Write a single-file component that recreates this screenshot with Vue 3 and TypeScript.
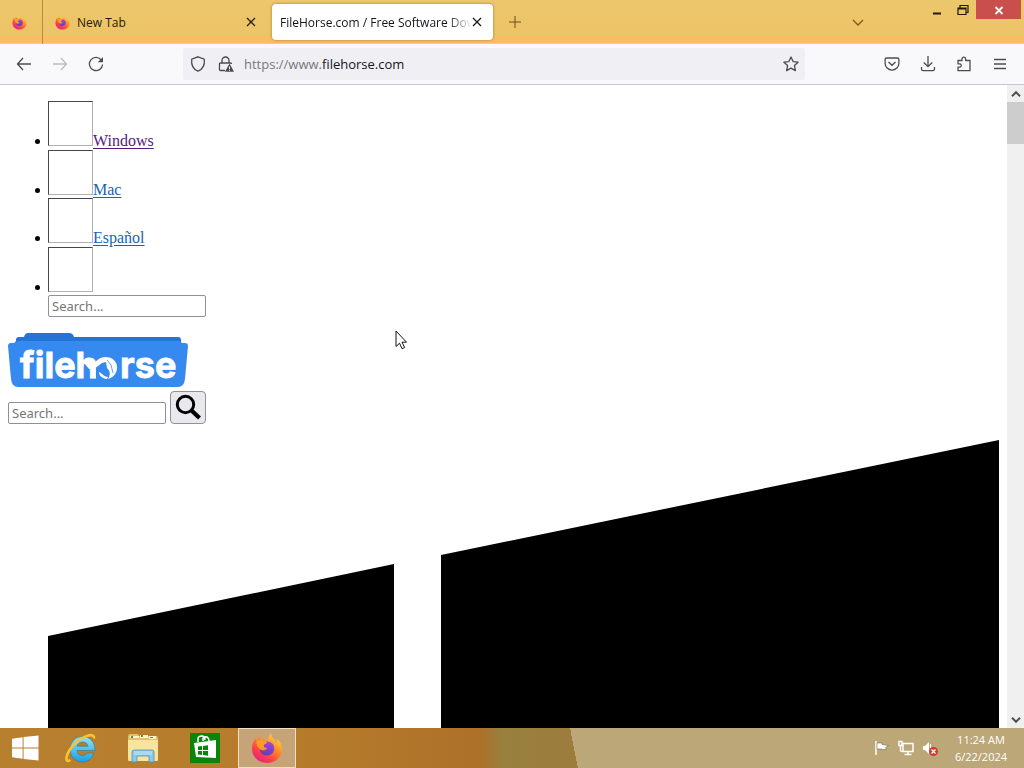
<script setup lang="ts">
import { ref } from 'vue'

interface NavLink {
  label: string
  visited: boolean
}

const links: NavLink[] = [
  { label: 'Windows', visited: true },
  { label: 'Mac', visited: false },
  { label: 'Español', visited: false },
]
const menuQuery = ref('')
const siteQuery = ref('')
</script>

<template>
  <svg class="defs" aria-hidden="true">
    <defs>
      <linearGradient id="fire" x1="0.85" y1="0.05" x2="0.2" y2="0.95">
        <stop offset="0" stop-color="#ffe14a" />
        <stop offset="0.4" stop-color="#ff8a26" />
        <stop offset="0.75" stop-color="#ff3d4a" />
        <stop offset="1" stop-color="#e3208a" />
      </linearGradient>
      <linearGradient id="globe" x1="0.6" y1="0" x2="0.3" y2="1">
        <stop offset="0" stop-color="#a347d8" />
        <stop offset="1" stop-color="#5b3cc0" />
      </linearGradient>
      <linearGradient id="ie" x1="0" y1="0" x2="0" y2="1">
        <stop offset="0" stop-color="#8be4fb" />
        <stop offset="1" stop-color="#1f9fdc" />
      </linearGradient>
      <symbol id="firefox" viewBox="0 0 32 32">
        <path fill="url(#fire)" d="M20.5 1c-.8 3 .7 4.600 2.600 6.300 1.400 1.200 2.200 2.600 2.700 4 .5-1.500.3-3.300-.2-4.600C29.300 9.200 31 13 31 17c0 8.200-6.500 14-15 14S1 24.800 1 16.800c0-4.300 1.400-7.600 3.700-10.300.1 1 .4 1.700.8 2.200C6.500 6.200 8 4.600 9.800 3.600c-.2 1.700.2 3 1 3.900 2.300-.1 4 .4 5.200 1.500C17.200 5.800 18 3 20.500 1z" />
        <path fill="url(#globe)" d="M16 9.500c4.300 0 7.300 3.100 7.300 7.100s-3.100 7-7.300 7-7.300-2.900-7.300-6.500c1.700 1.700 4 1.900 5.800 1 1.600-.8 2.100-1.700 1.500-2.100-1.300-.7-3.200.2-4.500-1.600C11 12.500 13 9.500 16 9.500z" />
        <path fill="#ff9b2b" d="M5.500 9c2-1.800 5.500-1.800 7.500.2 1.500.4 3 .7 3 1.600-.2 1-2.800 1.100-3.300 2.700-.2 1.300 1 2.300 2.600 2.600-1 1.900-3.900 2.500-6.300.900C6.500 15.500 5 12 5.500 9z" />
      </symbol>
      <symbol id="cross" viewBox="0 0 10 10">
        <path d="M1 1l8 8M9 1L1 9" fill="none" stroke="currentColor" stroke-width="1.200" />
      </symbol>
    </defs>
  </svg>

  <div class="desktop">
    <header class="tabs">
      <button class="pinned" aria-label="Pinned tab"><svg class="fav"><use href="#firefox" /></svg></button>
      <div class="tab">
        <svg class="fav"><use href="#firefox" /></svg>
        <span class="title">New Tab</span>
        <button class="x" aria-label="Close New Tab"><svg><use href="#cross" /></svg></button>
      </div>
      <div class="tab active">
        <span class="title fade">FileHorse.com / Free Software Dow</span>
        <button class="x" aria-label="Close FileHorse.com"><svg><use href="#cross" /></svg></button>
      </div>
      <button class="new" aria-label="New tab">
        <svg viewBox="0 0 12 12"><path d="M6 0v12M0 6h12" stroke="#6b4c1c" /></svg>
      </button>
      <button class="all" aria-label="List all tabs">
        <svg viewBox="0 0 12 7"><path d="M1 1l5 5 5-5" fill="none" stroke="#885510" stroke-width="1.300" /></svg>
      </button>
      <div class="window-buttons">
        <button aria-label="Minimize"><svg viewBox="0 0 12 12"><path d="M2 8.500h8v2H2z" fill="#22180b" /></svg></button>
        <button aria-label="Restore"><svg viewBox="0 0 12 12"><path d="M1 4h8v6.500H1zM1 5h8M3 3.500V1.500h8v7H9" fill="none" stroke="#22180b" stroke-width="1.200" /></svg></button>
        <button class="close" aria-label="Close"><svg viewBox="0 0 12 12"><path d="M2.500 3l7 7M9.500 3l-7 7" stroke="#fff" stroke-width="1.800" /></svg></button>
      </div>
    </header>

    <nav class="toolbar" aria-label="Navigation">
      <div class="history">
        <button aria-label="Back"><svg viewBox="0 0 16 16"><path d="M15 8H1.500M7 2L1.500 8 7 14" /></svg></button>
        <button class="off" aria-label="Forward" disabled><svg viewBox="0 0 16 16"><path d="M1 8h13.500M9 2l5.500 6L9 14" /></svg></button>
        <button aria-label="Reload"><svg viewBox="0 0 16 16"><path d="M13.500 4.300A6.600 6.600 0 1 0 14.600 8.500" /><path d="M15 1v5.200H9.800z" fill="#4b4b52" stroke="none" /></svg></button>
      </div>
      <div class="address">
        <button aria-label="Tracking protection"><svg viewBox="0 0 16 16"><path d="M8 .8l6.300 2.400c.5 5-.6 9.700-6.300 12-5.700-2.300-6.800-7-6.300-12z" /></svg></button>
        <button aria-label="Connection is not secure"><svg viewBox="0 0 16 16"><path d="M4 7V4.500a3.500 3.500 0 0 1 7 0V7M7 14.500H2.500c-.6 0-1-.4-1-1V8c0-.6.400-1 1-1h10c.6 0 1 .4 1 1" /><path d="M11.500 7.500L16 15.800H7z" fill="#4b4b52" stroke="none" /><path d="M11.500 10.500v2.500M11.500 13.700v1" stroke="#fff" stroke-width="1" /></svg></button>
        <span class="url">https://www.<b>filehorse.com</b></span>
        <button aria-label="Bookmark this page"><svg viewBox="0 0 16 16"><path d="M8 1l2.100 4.600 5 .6-3.700 3.400 1 5L8 12.100l-4.400 2.500 1-5L.9 6.200l5-.6z" stroke-linejoin="round" /></svg></button>
      </div>
      <div class="actions">
        <button aria-label="Save to Pocket"><svg viewBox="0 0 16 16"><path d="M2.500 2h11c.8 0 1.400.6 1.400 1.400v3.800a6.900 6.900 0 0 1-13.800 0V3.400C1.100 2.600 1.700 2 2.500 2zM4.500 6L8 9.300 11.500 6" /></svg></button>
        <button aria-label="Downloads"><svg viewBox="0 0 16 16"><path d="M8 0v10.500M3.800 6.500L8 10.700l4.200-4.200M1.500 11v2c0 1 .6 1.700 1.700 1.700h9.600c1 0 1.700-.7 1.700-1.700v-2" /></svg></button>
        <button aria-label="Extensions"><svg viewBox="0 0 16 16"><path d="M2 14.500v-3.300h1.600a1.700 1.700 0 0 0 0-3.400H2V4.500h4V3a1.800 1.800 0 0 1 3.600 0v1.500H14v10.200H2z" stroke-linejoin="round" /></svg></button>
        <button aria-label="Menu"><svg viewBox="0 0 16 16"><path d="M2 3.500h12M2 8h12M2 12.500h12" /></svg></button>
      </div>
    </nav>

    <div class="viewport">
      <main class="page">
        <ul>
          <li v-for="link in links" :key="link.label">
            <a href="#" :class="{ visited: link.visited }"><span class="missing"></span>{{ link.label }}</a>
          </li>
          <li>
            <a href="#" aria-label="Search menu"><span class="missing"></span></a>
            <form @submit.prevent><input v-model="menuQuery" aria-label="Search menu" placeholder="Search..." /></form>
          </li>
        </ul>
        <a class="logo" href="#" aria-label="FileHorse">
          <svg viewBox="0 0 180 54">
            <path d="M8 14V7q0-3 3-3h5q1-4 4-4h41q4 0 5 4h104q3 0 3 3v7z" fill="#2573d4" />
            <path d="M0 13q0-3 3-3h3q1-2 4-2h160q3 0 4 2h3q3 0 3 3l-3 33q-1 8-7 8H10q-6 0-7-8z" fill="#368aef" />
            <text x="12" y="45" font-family="Inter, 'Liberation Sans', sans-serif" font-size="36" font-weight="700" fill="#fff" stroke="#fff" stroke-width="0.800">filehorse</text>
            <path d="M88 22h18q6 4 6 12t-6 12H88z" fill="#368aef" />
            <path d="M76 30q5-5 10 0c4-4 7-6 11-6 8 0 12 5 12 10 0 6-3 10-9 12 3-5 2-8-1-11l-1-6-4 1-8 6h-5z" fill="#fff" />
            <path d="M91 39c3 1 5 5 9 5l-1 2c-4 0-8-3-8-7z" fill="#fff" />
            <path d="M99 27l4 5 2 8" fill="none" stroke="#368aef" stroke-width="0.800" />
          </svg>
        </a>
        <form class="search" @submit.prevent>
          <input v-model="siteQuery" aria-label="Search software" placeholder="Search..." />
          <button aria-label="Search">
            <svg viewBox="0 0 26 26"><circle cx="10.500" cy="10.500" r="8.200" fill="none" stroke="#000" stroke-width="3" /><path d="M16 16l8.500 8" stroke="#000" stroke-width="4.200" /></svg>
          </button>
        </form>
        <div class="platform">
          <svg viewBox="0 0 951 951" aria-label="Windows">
            <path d="M0 196l346-72v330H0zM393 115L951 0v454H393zM0 500h346v330L0 758zM393 500h558v451L393 838z" />
          </svg>
        </div>
      </main>
      <div class="scrollbar">
        <button aria-label="Scroll up"><svg viewBox="0 0 10 6"><path d="M1 5.200l4-4 4 4" /></svg></button>
        <div class="track"><div class="thumb"></div></div>
        <button aria-label="Scroll down"><svg viewBox="0 0 10 6"><path d="M1 .8l4 4 4-4" /></svg></button>
      </div>
    </div>

    <footer class="taskbar">
      <button class="start" aria-label="Start"><svg viewBox="0 0 28 26"><path d="M0 3.500l11-1.700v10.700H0zM12 1.600L27.500 0v12.500H12zM0 13.500h11v10.700L0 22.700zM12 13.500h15.500V26L12 24.400z" fill="#fff" /></svg></button>
      <button class="app" aria-label="Internet Explorer">
        <svg viewBox="0 0 32 32">
          <path d="M30 18.500H12c.3 3.300 2.500 5 5.300 5 2.200 0 3.600-.8 4.500-2.400h7C27 27 23 30 17.500 30 10.500 30 5 24.500 5 17.200 5 10 10.500 4.500 17.500 4.500 25 4.500 30 10 30 18.500zm-7-4.300c-.3-2.500-2.400-4.200-5.300-4.200s-5 1.700-5.400 4.200z" fill="url(#ie)" stroke="#287ba5" stroke-width="0.600" />
          <path d="M5.500 28C-1 32 .5 21.500 9 12.500S30 0 29 6.500" fill="none" stroke="#fbc334" stroke-width="2.600" />
        </svg>
      </button>
      <button class="app" aria-label="File Explorer">
        <svg viewBox="0 0 32 32">
          <path d="M1 4l1-2h9l1 2h17q2 0 2 2v22H1z" fill="#e3bf68" />
          <path d="M3 4h9v2H3zM13 3h8v3h-8zM22 4h7v3h-7z" fill="#fff5c9" />
          <path d="M4 4h2v2H4zM14 3h2v2h-2zM23 5h3v1h-3z" fill="#4a8d56" />
          <path d="M1 8h30v20q0 1-1 1H2q-1 0-1-1z" fill="#f8e49c" />
          <path d="M5 20q0-2 2-2h18q2 0 2 2v10h-5v-6H10v6H5z" fill="#8bc8e9" stroke="#4995bd" stroke-width="0.800" />
          <path d="M7 20h18M7 22h18" stroke="#cceafa" />
        </svg>
      </button>
      <button class="app" aria-label="Store">
        <svg viewBox="0 0 32 32">
          <path d="M1 1h30v30H1z" fill="#098509" />
          <path d="M5 11l22-3v18L7 25z" fill="#fff" />
          <path d="M9 10V7q0-3 4-3 3 0 3 4M14 9V6q1-2 4-1 2 1 2 4" fill="none" stroke="#fff" stroke-width="1.500" />
          <path d="M9 14.500l4-.5v4H9zM14 13.900l5-.6V18h-5zM9 19h4v4l-4-.5zM14 19h5v4.700l-5-.6z" fill="#098509" />
        </svg>
      </button>
      <button class="app running" aria-label="Firefox"><svg><use href="#firefox" /></svg></button>
      <div class="tray">
        <svg viewBox="0 0 16 16" aria-label="Action Center"><path d="M2 1v14" stroke="#fff" stroke-width="1.500" /><path d="M3 3h5v1.500l6.500 1-3 2 1 2H8V9H3z" fill="#fff" stroke="#6b5a3a" stroke-width="0.500" /></svg>
        <svg viewBox="0 0 16 16" aria-label="Network"><path d="M5 3.500h10v8H5zM10 11.500V14M6.500 14.500h7M1 1.500h3v4H1zM2.500 5.500v5q0 1 2 1" fill="none" stroke="#fff" stroke-width="1.500" /></svg>
        <svg viewBox="0 0 16 16" aria-label="Volume muted"><path d="M1 6h2l4-4v12l-4-4H1z" fill="#fff" /><path d="M8.500 4v4" stroke="#fff" /><circle cx="11.500" cy="11.500" r="4.500" fill="#d9382b" /><path d="M9.500 9.500l4 4M13.500 9.500l-4 4" stroke="#fff" stroke-width="1.400" /></svg>
      </div>
      <div class="clock"><time>11:24 AM</time><time>6/22/2024</time></div>
    </footer>

    <svg class="cursor" viewBox="0 0 12 20" aria-hidden="true"><path d="M1 1v15.500l3.500-3.300 2.600 5.500 2.500-1.200L7 12.200h4.500z" fill="#fff" stroke="#111" /></svg>
  </div>
</template>

<style>
body {
  margin: 0;
}
</style>

<style scoped>
* {
  box-sizing: border-box;
}
.defs {
  position: absolute;
  width: 0;
  height: 0;
}
.desktop {
  position: relative;
  display: flex;
  flex-direction: column;
  height: 100vh;
  overflow: hidden;
  font-family: "Open Sans", "Noto Sans", sans-serif;
  font-size: 12px;
}
button {
  display: flex;
  align-items: center;
  justify-content: center;
  padding: 0;
  border: 0;
  background: none;
  color: inherit;
}
svg {
  display: block;
}
.tabs {
  display: flex;
  flex: none;
  height: 44px;
  background: linear-gradient(#ecc76b 0, #edc467 34px, #f9bd63 38px, #fabd65 43px, #f5d7a5 44px);
}
.pinned {
  width: 43px;
  padding-right: 3px;
  border-right: 1px solid #b88b3f;
}
.fav {
  flex: none;
  width: 15px;
  height: 15px;
}
.tab {
  display: flex;
  align-items: center;
  gap: 7px;
  width: 221px;
  margin: 4px 4px 4px 0;
  padding: 0 11px 0 12px;
  color: #241a0b;
}
.pinned + .tab {
  width: 225px;
  padding-right: 12px;
}
.tab.active {
  padding-left: 8px;
  border-radius: 4px;
  background: #fff;
  box-shadow: 0 0 3px #a37a34;
  color: #15141a;
  gap: 0;
}
.title {
  flex: 1;
  min-width: 0;
  overflow: hidden;
  white-space: nowrap;
}
.fade {
  mask-image: linear-gradient(to right, #000 168px, transparent 192px);
}
.x {
  flex: none;
  width: 10px;
  height: 16px;
}
.x svg {
  width: 10px;
  height: 10px;
}
.new {
  width: 36px;
}
.new svg {
  width: 12px;
  height: 12px;
}
.all {
  width: 36px;
  margin-left: auto;
}
.all svg {
  width: 12px;
  height: 7px;
}
.window-buttons {
  display: flex;
  height: 19px;
  margin: 0 3px 0 48px;
}
.window-buttons button {
  width: 26px;
}
.window-buttons .close {
  width: 45px;
  background: #c94f4c;
}
.window-buttons svg {
  width: 12px;
  height: 12px;
}
.toolbar {
  display: flex;
  align-items: center;
  flex: none;
  height: 41px;
  border-bottom: 1px solid #c8c8ca;
  background: #f9f9fb;
}
.toolbar svg {
  width: 16px;
  height: 16px;
  fill: none;
  stroke: #4b4b52;
  stroke-width: 1.3;
}
.toolbar button {
  width: 36px;
  height: 32px;
}
.history {
  display: flex;
  width: 183px;
  padding-left: 6px;
}
.toolbar .off {
  opacity: 0.35;
}
.address {
  display: flex;
  flex: 1;
  align-items: center;
  height: 32px;
  padding-left: 1px;
  border-radius: 3px;
  background: #f0f0f4;
}
.address button {
  width: 28px;
}
.url {
  flex: 1;
  margin-left: 4px;
  color: #77777d;
  font-size: 13px;
}
.url b {
  color: #15141a;
  font-weight: 400;
}
.actions {
  display: flex;
  width: 219px;
  padding-right: 6px;
  justify-content: flex-end;
}
.viewport {
  display: flex;
  flex: 1;
  min-height: 0;
  background: #fff;
}
.page {
  flex: 1;
  min-width: 0;
  overflow: hidden;
  padding: 0 8px;
  font: 16px/16px "Liberation Serif", serif;
}
ul {
  margin: 16px 0;
  padding-left: 43px;
}
li > * {
  margin-left: -3px;
}
li:nth-child(odd) {
  padding-bottom: 1px;
}
.page a {
  color: #1464b4;
  text-underline-offset: 2px;
}
.page a.visited {
  color: #551a80;
}
.missing {
  display: inline-block;
  width: 45px;
  height: 45px;
  border: 1px solid;
  border-color: #45454b #b0b0b4 #b0b0b4 #45454b;
}
form input {
  display: block;
  width: 158px;
  height: 22px;
  padding: 1px 3px;
  border: 1px solid #8f8f9d;
  border-radius: 2px;
  background: #fff;
  color: #222;
  font: 13px "Noto Sans", sans-serif;
}
input::placeholder {
  color: #757575;
  opacity: 1;
}
.logo {
  display: block;
  width: 180px;
}
.search {
  display: flex;
  align-items: flex-end;
  gap: 4px;
  margin-top: 4px;
}
.search button {
  width: 36px;
  height: 33px;
  padding-bottom: 2px;
  border: 1px solid #8f8f9d;
  border-radius: 4px;
  background: #e9e9ed;
}
.search svg {
  width: 26px;
  height: 26px;
}
.platform {
  margin-top: 16px;
  padding-left: 40px;
}
.platform svg {
  width: 100%;
}
.scrollbar {
  display: flex;
  flex-direction: column;
  flex: none;
  width: 17px;
  background: #f0f0f0;
}
.scrollbar button {
  height: 17px;
}
.scrollbar svg {
  width: 10px;
  height: 6px;
  fill: none;
  stroke: #505050;
  stroke-width: 2;
}
.track {
  flex: 1;
}
.thumb {
  height: 42px;
  background: #cdcdcd;
}
.taskbar {
  display: flex;
  flex: none;
  align-items: center;
  height: 40px;
  background:
    linear-gradient(79deg, transparent 56%, #bba777 56%) no-repeat,
    linear-gradient(90deg, #b7802f 0, #b57b2b 32%, #ad7029 47%, #98803e 49%, #9f7c3d 58%);
}
.start {
  width: 50px;
}
.start svg {
  width: 27px;
  height: 26px;
}
.app {
  width: 58px;
  height: 40px;
  margin-right: 4px;
}
.app svg {
  width: 32px;
  height: 32px;
}
.start + .app {
  margin-left: 2px;
}
.running {
  border: 1px solid #f0dfc4;
  background: #c6a477;
}
.tray {
  display: flex;
  gap: 8px;
  margin-left: auto;
}
.tray svg {
  width: 16px;
  height: 16px;
}
.clock {
  display: flex;
  flex-direction: column;
  align-items: center;
  width: 86px;
  color: #fff;
  font-size: 11px;
  line-height: 17px;
}
.cursor {
  position: absolute;
  top: 330px;
  left: 395px;
  width: 12px;
  height: 20px;
}
</style>
